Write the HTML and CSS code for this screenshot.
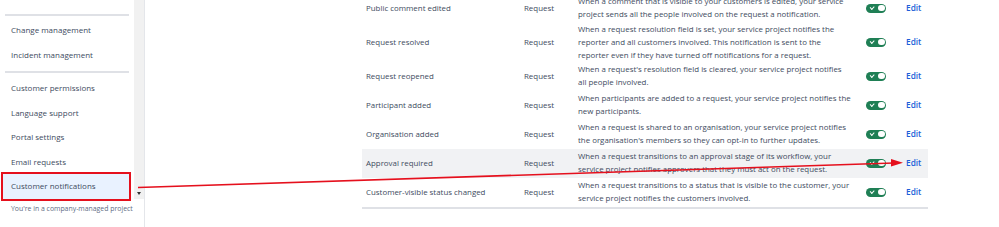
FILE: index.html
```html
<!DOCTYPE html>
<html>
<head>
<meta charset="utf-8">
<link rel="stylesheet" href="styles.css">
</head>
<body>
<div class="page">
  <aside class="sidebar">
    <nav class="nav">
      <div class="item">External resources</div>
      <div class="sep sep-a"></div>
      <div class="item">Change management</div>
      <div class="item">Incident management</div>
      <div class="sep sep-b"></div>
      <div class="item">Customer permissions</div>
      <div class="item">Language support</div>
      <div class="item">Portal settings</div>
      <div class="item">Email requests</div>
      <div class="item active">Customer notifications</div>
      <div class="footer">You're in a company-managed project</div>
    </nav>
    <div class="scroll"><span class="scroll-arrow"></span></div>
  </aside>
  <main class="main">
    <table class="notif">
      <colgroup>
        <col class="w-name"><col class="w-type"><col class="w-desc"><col class="w-tog"><col class="w-edit">
      </colgroup>
      <tr>
        <td>Public comment edited</td>
        <td>Request</td>
        <td>When a comment that is visible to your customers is edited, your service<br>project sends all the people involved on the request a notification.</td>
        <td><span class="toggle"></span></td>
        <td><a class="edit">Edit</a></td>
      </tr>
      <tr>
        <td>Request resolved</td>
        <td>Request</td>
        <td>When a request resolution field is set, your service project notifies the<br>reporter and all customers involved. This notification is sent to the<br>reporter even if they have turned off notifications for a request.</td>
        <td><span class="toggle"></span></td>
        <td><a class="edit">Edit</a></td>
      </tr>
      <tr>
        <td>Request reopened</td>
        <td>Request</td>
        <td>When a request's resolution field is cleared, your service project notifies<br>all people involved.</td>
        <td><span class="toggle"></span></td>
        <td><a class="edit">Edit</a></td>
      </tr>
      <tr>
        <td>Participant added</td>
        <td>Request</td>
        <td>When participants are added to a request, your service project notifies the<br>new participants.</td>
        <td><span class="toggle"></span></td>
        <td><a class="edit">Edit</a></td>
      </tr>
      <tr>
        <td>Organisation added</td>
        <td>Request</td>
        <td>When a request is shared to an organisation, your service project notifies<br>the organisation's members so they can opt-in to further updates.</td>
        <td><span class="toggle"></span></td>
        <td><a class="edit">Edit</a></td>
      </tr>
      <tr class="hover">
        <td>Approval required</td>
        <td>Request</td>
        <td>When a request transitions to an approval stage of its workflow, your<br>service project notifies approvers that they must act on the request.</td>
        <td><span class="toggle"></span></td>
        <td><a class="edit">Edit</a></td>
      </tr>
      <tr class="last">
        <td>Customer-visible status changed</td>
        <td>Request</td>
        <td>When a request transitions to a status that is visible to the customer, your<br>service project notifies the customers involved.</td>
        <td><span class="toggle"></span></td>
        <td><a class="edit">Edit</a></td>
      </tr>
    </table>
  </main>
  <svg class="annot" width="999" height="227" viewBox="0 0 999 227">
    <line x1="138" y1="187.5" x2="894" y2="163" stroke="#e5101d" stroke-width="1.6"/>
    <polygon points="891,159 903,162.7 891,166.5" fill="#e5101d"/>
  </svg>
</div>
</body>
</html>
```

FILE: styles.css
```css
html, body {
  margin: 0;
  padding: 0;
  background: #ffffff;
}
.page {
  position: relative;
  width: 999px;
  height: 227px;
  overflow: hidden;
  display: flex;
  font-family: "Open Sans", "Noto Sans", sans-serif;
}
.sidebar {
  width: 144px;
  flex: none;
  display: flex;
  border-right: 1px solid #e4e6ea;
  height: 227px;
}
.nav {
  width: 134px;
  padding-left: 3px;
  box-sizing: border-box;
  margin-top: -16px;
}
.item {
  width: 126px;
  height: 24.5px;
  line-height: 24.5px;
  padding-left: 8px;
  box-sizing: border-box;
  font-size: 8px;
  color: #3e4b60;
  white-space: nowrap;
}
.item.active {
  background: #e9f2ff;
  outline: 2px solid #e5101d;
  outline-offset: 0;
}
.sep {
  height: 2px;
  background: #dfe1e6;
  margin-left: 2px;
  width: 124px;
}
.sep-a { margin-top: 5px; margin-bottom: 2.5px; }
.sep-b { margin-top: 4px; margin-bottom: 3px; }
.footer {
  padding-left: 8px;
  margin-top: 5.5px;
  font-size: 6.9px;
  color: #5e6c84;
  white-space: nowrap;
}
.scroll {
  width: 10px;
  height: 199px;
  background: #f1f1f1;
  position: relative;
  flex: none;
}
.scroll-arrow {
  position: absolute;
  left: 3px;
  top: 192px;
  width: 0;
  height: 0;
  border-left: 2.5px solid transparent;
  border-right: 2.5px solid transparent;
  border-top: 3px solid #333;
}
.main {
  flex: 1;
  padding-left: 217px;
}
.notif {
  border-collapse: collapse;
  table-layout: fixed;
  margin-top: -6.5px;
  width: 566px;
  font-size: 7.9px;
  color: #3e4b60;
}
.w-name { width: 158px; }
.w-type { width: 54px; }
.w-desc { width: 288px; }
.w-tog { width: 40px; }
.w-edit { width: 26px; }
.notif td {
  height: 29px;
  padding: 0 4px;
  line-height: 13px;
  vertical-align: middle;
  white-space: nowrap;
  overflow: hidden;
}
.notif tr.hover td { background: #f1f2f4; }
.notif tr.last td { border-bottom: 2px solid #dfe1e6; }
.toggle {
  display: block;
  position: relative;
  width: 20px;
  height: 9px;
  border-radius: 4.5px;
  background: #1f7f55;
}
.toggle::before {
  content: "";
  position: absolute;
  left: 3.5px;
  top: 2.3px;
  width: 3px;
  height: 1.5px;
  border-left: 1.2px solid #fff;
  border-bottom: 1.2px solid #fff;
  transform: rotate(-45deg);
}
.toggle::after {
  content: "";
  position: absolute;
  right: 1.3px;
  top: 1.2px;
  width: 6.6px;
  height: 6.6px;
  border-radius: 50%;
  background: #fff;
}
.edit {
  color: #1d5fd8;
  font-weight: 600;
  font-size: 8.3px;
}
.annot {
  position: absolute;
  left: 0;
  top: 0;
  pointer-events: none;
}
```
